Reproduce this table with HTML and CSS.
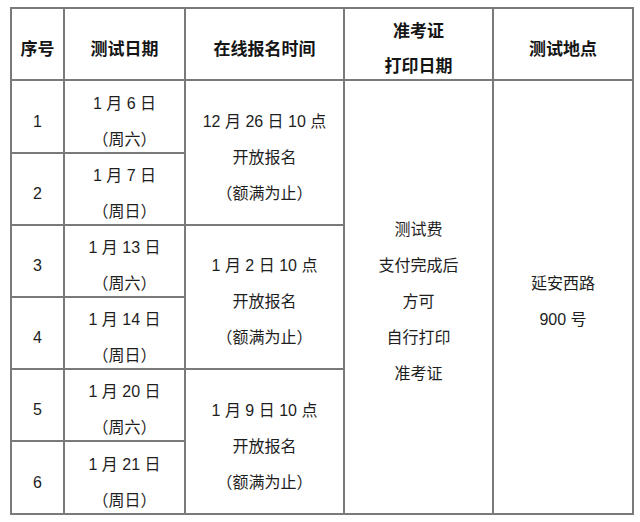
FILE: index.html
```html
<!DOCTYPE html>
<html lang="zh-CN">
<head>
<meta charset="utf-8">
<title>测试安排</title>
<link rel="stylesheet" href="styles.css">
</head>
<body>
<div class="sheet">
  <div class="cell head">序号</div>
  <div class="cell head">测试日期</div>
  <div class="cell head">在线报名时间</div>
  <div class="cell head"><span>准考证</span><span>打印日期</span></div>
  <div class="cell head">测试地点</div>

  <div class="cell r1">1</div>
  <div class="cell r1"><span>1 月 6 日</span><span>（周六）</span></div>
  <div class="cell reg r1-2"><span>12 月 26 日 10 点</span><span>开放报名</span><span>（额满为止）</span></div>
  <div class="cell print"><span>测试费</span><span>支付完成后</span><span>方可</span><span>自行打印</span><span>准考证</span></div>
  <div class="cell place"><span>延安西路</span><span>900 号</span></div>

  <div class="cell">2</div>
  <div class="cell"><span>1 月 7 日</span><span>（周日）</span></div>

  <div class="cell">3</div>
  <div class="cell"><span>1 月 13 日</span><span>（周六）</span></div>
  <div class="cell reg r3-4"><span>1 月 2 日 10 点</span><span>开放报名</span><span>（额满为止）</span></div>

  <div class="cell">4</div>
  <div class="cell"><span>1 月 14 日</span><span>（周日）</span></div>

  <div class="cell">5</div>
  <div class="cell"><span>1 月 20 日</span><span>（周六）</span></div>
  <div class="cell reg r5-6"><span>1 月 9 日 10 点</span><span>开放报名</span><span>（额满为止）</span></div>

  <div class="cell">6</div>
  <div class="cell"><span>1 月 21 日</span><span>（周日）</span></div>
</div>
</body>
</html>
```

FILE: styles.css
```css
html, body {
  margin: 0;
  padding: 0;
  background: #ffffff;
}

body {
  font-family: "Liberation Sans", "Noto Sans CJK SC", sans-serif;
  color: #1e1e1e;
}

.sheet {
  margin: 7px 0 0 10px;
  width: 624px;
  box-sizing: border-box;
  display: grid;
  grid-template-columns: 51px 119px 157px 147px 138px;
  grid-template-rows: 70px 71px 70px 70px 70px 70px 71px;
  gap: 2px;
  padding: 2px;
  background: #7a7a7a;
}

.cell {
  background: #ffffff;
  display: flex;
  flex-direction: column;
  align-items: center;
  justify-content: center;
  padding-top: 10px;
  font-size: 16px;
  line-height: 36px;
  text-align: center;
  white-space: nowrap;
  box-sizing: border-box;
}

.cell span {
  display: block;
}

.head {
  font-size: 17px;
  font-weight: bold;
  line-height: 35px;
  color: #151515;
}

.reg.r1-2 { grid-column: 3; grid-row: 2 / span 2; }
.reg.r3-4 { grid-column: 3; grid-row: 4 / span 2; }
.reg.r5-6 { grid-column: 3; grid-row: 6 / span 2; }

.print { grid-column: 4; grid-row: 2 / span 6; }
.place { grid-column: 5; grid-row: 2 / span 6; }
```
